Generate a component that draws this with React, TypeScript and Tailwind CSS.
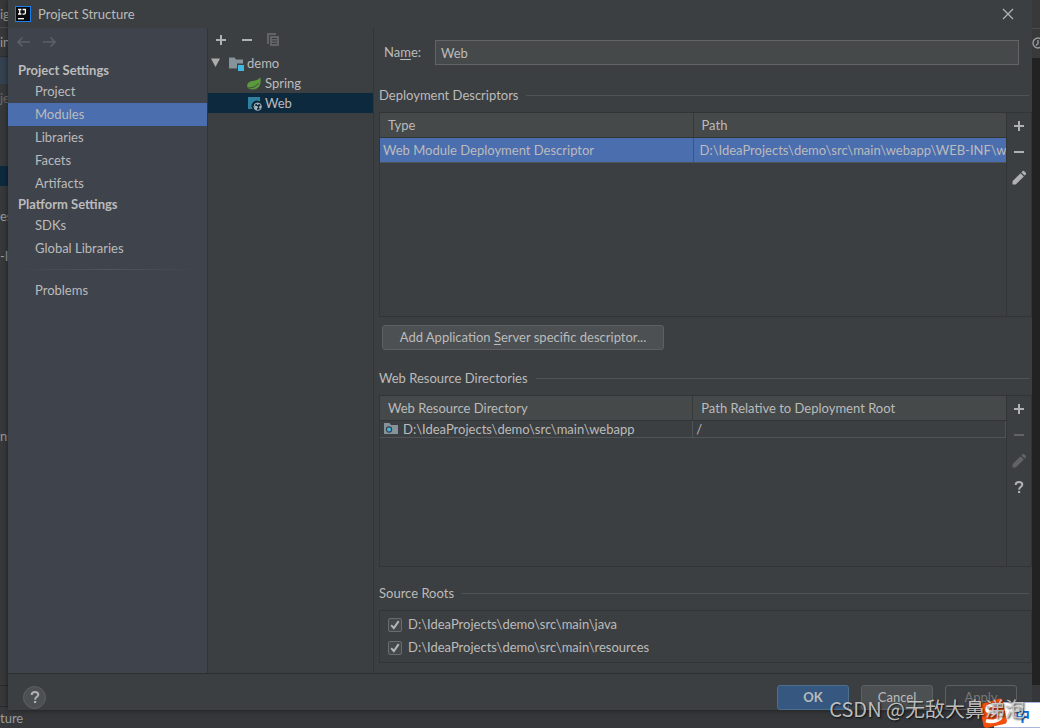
import React, { useState } from "react";
import type { ReactNode } from "react";

const ROW = "h-[23px] w-full pl-[27px] text-left leading-[23px]";

function Plus() {
  return (
    <svg width="16" height="16" viewBox="0 0 16 16" fill="currentColor" shapeRendering="crispEdges">
      <path d="M7 3h2v4h4v2H9v4H7V9H3V7h4z" />
    </svg>
  );
}

function Minus() {
  return (
    <svg width="16" height="16" viewBox="0 0 16 16" fill="currentColor" shapeRendering="crispEdges">
      <path d="M3 7h10v2H3z" />
    </svg>
  );
}

function Copy() {
  return (
    <svg width="16" height="16" viewBox="0 0 16 16" fill="currentColor">
      <path d="M2 1h9v2H4v9H2z" />
      <path fillRule="evenodd" d="M5 4h9v10H5zM7 6v1h5V6zM7 8.500v1h5v-1zM7 11v1h5v-1z" />
    </svg>
  );
}

function Pencil() {
  return (
    <svg width="16" height="16" viewBox="0 0 16 16" fill="currentColor">
      <path d="M1.500 11.300L9.600 3.200l3.200 3.200-8.100 8.100H1.500z" />
      <path d="M10.400 2.400l1.200-1.200c.5-.5 1.100-.5 1.600 0l1.600 1.600c.5.5.5 1.100 0 1.600l-1.200 1.200z" />
    </svg>
  );
}

function Question() {
  return (
    <svg width="16" height="16" viewBox="0 0 16 16" fill="none" stroke="currentColor" strokeWidth="2">
      <path d="M4.700 6C4.700 4 6 3 8 3s3.300 1.100 3.300 2.700c0 2-3.200 2.300-3.200 5" />
      <path d="M7 13h2.200" />
    </svg>
  );
}

function Arrow({ left = false }: { left?: boolean }) {
  return (
    <svg width="14" height="12" viewBox="0 0 14 12" fill="none" stroke="currentColor" strokeWidth="1.700">
      {left ? <path d="M14 6H2M6.500 1.500L2 6l4.500 4.500" /> : <path d="M0 6h12M7.500 1.500L12 6l-4.500 4.500" />}
    </svg>
  );
}

function IdeaLogo() {
  return (
    <svg width="16" height="16" viewBox="0 0 16 16">
      <rect x=".5" y=".5" width="15" height="15" fill="#0b0b0d" stroke="#1a7df0" />
      <g fill="none" stroke="#fff" strokeWidth="1.300">
        <path d="M3 3.500h3.400M4.700 3.500v4.400M3 8h3.400M7.600 3.500h2.800v3.200c0 1-.6 1.400-1.300 1.400H7.500" />
        <path d="M3 12.700h6" />
      </g>
    </svg>
  );
}

function ModuleFolder() {
  return (
    <svg width="16" height="16" viewBox="0 0 16 16">
      <path d="M1 2.500h5.500L8 4.500h7V8.500H9V13.500H1z" fill="#87939a" />
      <path d="M10 10h6v6h-6z" fill="#40b6e0" />
    </svg>
  );
}

function SpringLeaf() {
  return (
    <svg width="16" height="16" viewBox="0 0 16 16">
      <path d="M14.200 2.300c.9 3.700.9 9-3.400 11.200-2.600 1.300-5.900 1-8.100.3C.5 12 .7 8.800 3 7.200c2.600-1.800 8.600-.7 11.200-4.900z" fill="#5a9a3d" />
      <path d="M1.500 13c4.700.3 8.700-1.300 11-4.800" fill="none" stroke="#3c3f41" strokeWidth=".9" />
    </svg>
  );
}

function WebFacet() {
  return (
    <svg width="16" height="16" viewBox="0 0 16 16">
      <path d="M2 2h12v4.600A5.300 5.300 0 0 0 6.600 14H2z" fill="#2f819f" />
      <circle cx="11.700" cy="11.700" r="3.700" fill="#0d293e" stroke="#a9b4ba" strokeWidth="1" />
      <path d="M8.200 10.500l3 .4.900 1.500-1 .9v1.900l-2-1zM10.500 8.200l2.400-.2-.4 1.800-1.300.3zM13.700 10.400l1.500.6-.3 1.900-1.200.8-.7-1.300z" fill="#a9b4ba" />
    </svg>
  );
}

function WebFolder() {
  return (
    <svg width="16" height="16" viewBox="0 0 16 16">
      <path d="M1 2h5.500L8 4h7v9H1z" fill="#87939a" />
      <circle cx="6" cy="8.500" r="2.600" fill="#40b6e0" stroke="#31424c" strokeWidth="1.200" />
    </svg>
  );
}

function IconButton({ label, disabled = false, children }: { label: string; disabled?: boolean; children: ReactNode }) {
  return (
    <button type="button" aria-label={label} disabled={disabled} className="flex h-4 w-4 items-center justify-center text-[#afb1b3] disabled:text-[#616365]">
      {children}
    </button>
  );
}

function SectionTitle({ children }: { children: ReactNode }) {
  return (
    <div className="flex h-5 shrink-0 items-center gap-2 pr-[3px]">
      <h2 className="leading-5">{children}</h2>
      <span className="h-px flex-1 bg-[#515456]" />
    </div>
  );
}

function TablePanel({ heads, tools, className, children }: { heads: string[]; tools: ReactNode; className: string; children: ReactNode }) {
  return (
    <div className={`mt-[7px] flex border border-[#323436] ${className}`}>
      <div className="min-w-0 flex-1 border-r border-[#323436]">
        <table className="w-full table-fixed border-collapse">
          <thead>
            <tr className="h-6 border-b border-[#323436] bg-[#45494a]">
              {heads.map((h, i) => (
                <th key={h} scope="col" className={`pl-2 text-left font-normal leading-6 ${i ? "border-l border-[#36393a]" : ""}`}>
                  {h}
                </th>
              ))}
            </tr>
          </thead>
          <tbody>{children}</tbody>
        </table>
      </div>
      <div className="flex w-6 flex-col items-center gap-[10px] pr-px pt-[5px]">{tools}</div>
    </div>
  );
}

function SourceRoot({ path }: { path: string }) {
  const [on, setOn] = useState(true);
  return (
    <label className="flex h-[23px] items-center gap-[6px] leading-[23px]">
      <span className="grid h-[14px] w-[14px]">
        <input
          type="checkbox"
          checked={on}
          onChange={() => setOn(!on)}
          className="col-start-1 row-start-1 h-[14px] w-[14px] appearance-none rounded-[2px] border border-[#6b6b6b] bg-[#43494a]"
        />
        {on && (
          <svg width="14" height="14" viewBox="0 0 14 14" className="pointer-events-none col-start-1 row-start-1" fill="none" stroke="#b4b6b8" strokeWidth="2">
            <path d="M3.200 7.200l2.600 2.900 4.900-7" />
          </svg>
        )}
      </span>
      {path}
    </label>
  );
}

const projectItems = ["Project", "Modules", "Libraries", "Facets", "Artifacts"];
const platformItems = ["SDKs", "Global Libraries"];

function Sidebar() {
  const [active, setActive] = useState("Modules");
  const item = (name: string) => (
    <button key={name} type="button" onClick={() => setActive(name)} className={`${ROW} ${active === name ? "bg-[#4b6eaf]" : ""}`}>
      {name}
    </button>
  );
  return (
    <nav className="flex w-[200px] shrink-0 flex-col border-r border-[#323436] bg-[#3f434c]">
      <div className="flex h-[33px] gap-[13px] pl-2 pt-2 text-[#5d6062]">
        <button type="button" aria-label="Back" disabled className="h-3"><Arrow left /></button>
        <button type="button" aria-label="Forward" disabled className="h-3"><Arrow /></button>
      </div>
      <h2 className="h-[19px] pl-[10px] font-bold leading-[19px]">Project Settings</h2>
      {projectItems.map(item)}
      <h2 className="h-[19px] pl-[10px] font-bold leading-[19px]">Platform Settings</h2>
      {platformItems.map(item)}
      <hr className="mx-2 my-[9px] h-px border-0 bg-linear-to-r from-transparent via-[#555557] to-transparent" />
      {item("Problems")}
    </nav>
  );
}

function ModuleTree() {
  return (
    <section className="w-[166px] shrink-0 border-r border-[#323436]">
      <div className="flex h-[25px] items-center gap-[10px] pb-px pl-[5px]">
        <IconButton label="Add"><Plus /></IconButton>
        <IconButton label="Remove"><Minus /></IconButton>
        <IconButton label="Copy" disabled><Copy /></IconButton>
      </div>
      <ul className="leading-5">
        <li className="flex h-5 items-center gap-[3px] pl-[3px]">
          <svg width="9" height="16" viewBox="0 0 9 16" fill="#adadad"><path d="M0 3.500h9L4.500 12z" /></svg>
          <span className="ml-[5px]"><ModuleFolder /></span>
          demo
        </li>
        <li className="flex h-5 items-center gap-[3px] pl-[38px]"><SpringLeaf />Spring</li>
        <li className="flex h-5 items-center gap-[3px] bg-[#0d293e] pl-[38px]"><WebFacet />Web</li>
      </ul>
    </section>
  );
}

function Details() {
  return (
    <main className="flex min-w-0 flex-1 flex-col pb-[10px] pl-[5px] pt-3">
      <div className="flex h-[25px] shrink-0 items-center pl-[5px] pr-[13px]">
        <label htmlFor="module-name" className="w-[51px]">Na<u className="underline-offset-2">m</u>e:</label>
        <input id="module-name" defaultValue="Web" className="h-[25px] min-w-0 flex-1 border border-[#646464] bg-[#45494a] px-[5px] outline-none" />
      </div>

      <div className="mt-5"><SectionTitle>Deployment Descriptors</SectionTitle></div>
      <TablePanel
        heads={["Type", "Path"]}
        className="flex-[1_1_205px]"
        tools={
          <>
            <IconButton label="Add descriptor"><Plus /></IconButton>
            <IconButton label="Remove descriptor"><Minus /></IconButton>
            <IconButton label="Edit descriptor"><Pencil /></IconButton>
          </>
        }
      >
        <tr className="h-[25px] border-b border-[#515456] bg-[#4b6eaf]">
          <td className="truncate pl-[3px] leading-6">Web Module Deployment Descriptor</td>
          <td className="overflow-hidden whitespace-nowrap border-l border-[#515456] pl-[6px] leading-6">D:\IdeaProjects\demo\src\main\webapp\WEB-INF\web.xml</td>
        </tr>
      </TablePanel>
      <div className="mt-2 shrink-0 pl-[3px]">
        <button type="button" className="block h-[25px] w-[282px] rounded-[3px] border border-[#5e6060] bg-[#4c5052] leading-[23px]">
          Add Application <u className="underline-offset-2">S</u>erver specific descriptor...
        </button>
      </div>

      <div className="mt-[18px]"><SectionTitle>Web Resource Directories</SectionTitle></div>
      <TablePanel
        heads={["Web Resource Directory", "Path Relative to Deployment Root"]}
        className="flex-[1_1_172px]"
        tools={
          <>
            <IconButton label="Add directory"><Plus /></IconButton>
            <IconButton label="Remove directory" disabled><Minus /></IconButton>
            <IconButton label="Edit directory" disabled><Pencil /></IconButton>
            <IconButton label="Directory help"><Question /></IconButton>
          </>
        }
      >
        <tr className="h-[17px] border-b border-r border-[#515456]">
          <td className="pl-[3px] leading-4">
            <span className="flex h-4 items-center gap-1"><WebFolder />D:\IdeaProjects\demo\src\main\webapp</span>
          </td>
          <td className="border-l border-[#515456] pl-[3px] leading-4">/</td>
        </tr>
      </TablePanel>

      <div className="mt-4"><SectionTitle>Source Roots</SectionTitle></div>
      <div className="mt-[7px] shrink-0 border border-[#323436] px-2 pb-[3px] pt-[2px]">
        <SourceRoot path="D:\IdeaProjects\demo\src\main\java" />
        <SourceRoot path="D:\IdeaProjects\demo\src\main\resources" />
      </div>
    </main>
  );
}

function Dialog() {
  return (
    <div className="flex min-w-0 flex-1 flex-col bg-[#3c3f41] shadow-[0_0_6px_#00000080]">
      <header className="flex h-7 shrink-0 items-center justify-between pl-[7px] pr-[18px]">
        <div className="flex items-center gap-[7px]"><IdeaLogo /><h1 className="leading-5">Project Structure</h1></div>
        <button type="button" aria-label="Close">
          <svg width="12" height="12" viewBox="0 0 12 12" fill="none" stroke="#b0b2b4" strokeWidth="1.300"><path d="M1 1l10 10M11 1L1 11" /></svg>
        </button>
      </header>
      <div className="flex flex-1"><Sidebar /><ModuleTree /><Details /></div>
      <footer className="flex h-[37px] shrink-0 items-center justify-between border-t border-[#2d2f30] px-[15px] pt-[10px]">
        <button type="button" aria-label="Help" className="flex h-[23px] w-[23px] items-center justify-center rounded-full border border-[#5e6060] bg-[#4c5052] text-[#afb1b3]">
          <Question />
        </button>
        <div className="flex gap-3 leading-[23px]">
          <button type="button" className="h-[25px] w-[72px] rounded-[3px] border border-[#4c708c] bg-[#365880] font-bold">OK</button>
          <button type="button" className="h-[25px] w-[72px] rounded-[3px] border border-[#5e6060] bg-[#4c5052]">Cancel</button>
          <button type="button" disabled className="h-[25px] w-[72px] rounded-[3px] border border-[#5e6060] text-[#777777]">Apply</button>
        </div>
      </footer>
    </div>
  );
}

export default function App() {
  return (
    <div className="relative flex min-h-screen flex-col overflow-hidden bg-[#35373a] font-['Lato','Noto_Sans_CJK_SC',sans-serif] text-[13px] text-[#bbbbbb]">
      <div className="flex flex-1">
        <div className="flex w-2 shrink-0 flex-col overflow-hidden whitespace-nowrap bg-[#37393a] leading-7 text-[#9a9c9e]">
          <div className="h-7 border-b border-[#4a4c4d]">ig</div>
          <div className="h-[29px] border-b border-[#2c2e2f]">in</div>
          <div className="h-[27px] bg-[#354250]" />
          <div className="h-[82px] text-[#6a6c6e]">je</div>
          <div className="h-5 bg-[#0d293e]" />
          <div className="mt-4 h-10">es</div>
          <div className="h-[180px]">-II</div>
          <div className="h-7">ns</div>
          <div className="mt-[235px] h-[22px] border-y border-[#292b2c]" />
        </div>
        <Dialog />
        <div className="flex w-2 shrink-0 flex-col overflow-hidden bg-[#222222]">
          <div className="h-7 bg-[#37393a]" />
          <div className="h-[30px] border-t border-[#4a4c4d] bg-[#37393a] pt-2">
            <svg width="12" height="14" viewBox="0 0 12 14" fill="none" stroke="#9a9c9e" strokeWidth="1.400">
              <circle cx="6" cy="6" r="5" /><path d="M6 3v3.500L4 8.500" /><path d="M8 6v7h4V6z" fill="#499c54" stroke="none" />
            </svg>
          </div>
          <div className="flex-1" />
          <div className="h-[25px] bg-[#35373a]" />
        </div>
      </div>
      <div className="h-[18px] shrink-0 overflow-hidden leading-4 text-[#9a9c9e]">ture</div>

      <div className="absolute bottom-0 right-0 h-[26px] w-[46px] border-y border-[#a9b6da] bg-white pr-[10px] text-right text-[15px] font-bold leading-6 text-[#0b6fd8]">中</div>
      <svg className="absolute bottom-0 right-[32px]" width="29" height="30" viewBox="0 0 29 30">
        <path d="M4 5.500L20 .8c2-.6 3.300.2 3.800 2.200l4 19c.4 2-.5 3.400-2.500 4L8.500 29.700c-2 .4-3.600-.4-4.100-2.500L1 10c-.4-2.200.8-3.800 3-4.500z" fill="#f2500f" />
        <path d="M22 7.500C17 5.500 8 7 8 11.500c0 4.500 14 1.500 14 6.500 0 4.500-9 6.500-15 4.500" fill="none" stroke="#fff" strokeWidth="3.600" />
      </svg>
      <p className="pointer-events-none absolute bottom-1 right-[15px] whitespace-nowrap font-['Noto_Sans_CJK_SC',sans-serif] text-[20px] leading-[30px] text-[#d0d0d0]/90 [text-shadow:1px_1px_2px_#000000cc]">CSDN @无敌大鼻涕泡</p>
    </div>
  );
}
